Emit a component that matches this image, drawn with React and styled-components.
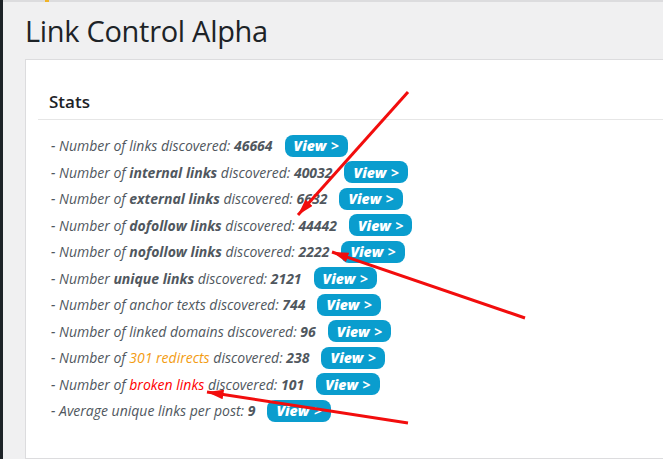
import React from "react";
import styled, { createGlobalStyle } from "styled-components";

const GlobalStyle = createGlobalStyle`
  html, body {
    margin: 0;
    padding: 0;
    height: 100%;
    overflow: hidden;
  }
  body {
    font-family: "Open Sans", "Noto Sans", sans-serif;
    background: #f0f0f1;
  }
`;

const stats = [
  { pre: "Number of ", strong: "", mid: "links discovered: ", value: "46664" },
  { pre: "Number of ", strong: "internal links", mid: " discovered: ", value: "40032" },
  { pre: "Number of ", strong: "external links", mid: " discovered: ", value: "6632" },
  { pre: "Number of ", strong: "dofollow links", mid: " discovered: ", value: "44442" },
  { pre: "Number of ", strong: "nofollow links", mid: " discovered: ", value: "2222" },
  { pre: "Number ", strong: "unique links", mid: " discovered: ", value: "2121" },
  { pre: "Number of anchor texts discovered: ", value: "744" },
  { pre: "Number of linked domains discovered: ", value: "96" },
  { pre: "Number of ", tone: "orange", tinted: "301 redirects", mid: " discovered: ", value: "238" },
  { pre: "Number of ", tone: "red", tinted: "broken links", mid: " discovered: ", value: "101" },
  { pre: "Average unique links per post: ", value: "9" },
];

export default function App() {
  return (
    <>
      <GlobalStyle />
      <Shell>
        <AdminBar />
        <Main>
          <NoticeEdge>
            <NoticeTick />
          </NoticeEdge>
          <Title>Link Control Alpha</Title>
          <Panel>
            <PanelHead>
              <h2>Stats</h2>
            </PanelHead>
            <List>
              {stats.map((s, i) => (
                <Row key={i}>
                  <Label>
                    - {s.pre}
                    {s.strong && <b>{s.strong}</b>}
                    {s.tinted && <Tint $tone={s.tone}>{s.tinted}</Tint>}
                    {s.mid}
                    <b>{s.value}</b>
                  </Label>
                  <ViewButton>
                    View <span>&gt;</span>
                  </ViewButton>
                </Row>
              ))}
            </List>
          </Panel>
        </Main>
        {/* annotation arrows drawn over the screenshot */}
        <Arrows viewBox="0 0 663 459">
          <defs>
            <marker id="head" markerWidth="6" markerHeight="4" refX="5.5" refY="1.6" orient="auto" markerUnits="strokeWidth">
              <path d="M0,0 L5.5,1.6 L0,3.2 Z" fill="#f20d0d" />
            </marker>
          </defs>
          <line x1="408" y1="92" x2="298" y2="215" stroke="#f20d0d" strokeWidth="3" markerEnd="url(#head)" />
          <line x1="525" y1="318" x2="332" y2="252" stroke="#f20d0d" strokeWidth="3" markerEnd="url(#head)" />
          <line x1="408" y1="423" x2="207" y2="392" stroke="#f20d0d" strokeWidth="3" markerEnd="url(#head)" />
        </Arrows>
      </Shell>
    </>
  );
}

const Shell = styled.div`
  position: relative;
  display: flex;
  height: 100vh;
  overflow: hidden;
`;

const AdminBar = styled.div`
  width: 3px;
  flex: none;
  background: #1d2327;
`;

const Main = styled.div`
  flex: 1;
  display: flex;
  flex-direction: column;
  padding-left: 22px;
  background: #f0f0f1;
`;

const NoticeEdge = styled.div`
  height: 2px;
  margin-left: -22px;
  background: #dcdcde;
`;

const NoticeTick = styled.div`
  width: 4px;
  height: 2px;
  margin-left: 42px;
  background: #f0b429;
`;

const Title = styled.h1`
  margin: 9px 0 0 0;
  font-size: 29px;
  font-weight: 400;
  line-height: 40px;
  color: #1d2327;
  letter-spacing: -0.3px;
`;

const Panel = styled.div`
  margin-top: 8px;
  margin-right: -10px;
  flex: 1;
  background: #fff;
  border: 1px solid #dcdcde;
`;

const PanelHead = styled.div`
  margin: 30px 0 0 12px;
  padding: 0 11px 5px;
  border-bottom: 1px solid #e6e6e6;

  h2 {
    margin: 0;
    font-size: 17px;
    font-weight: 600;
    line-height: 24px;
    color: #1d2327;
  }
`;

const List = styled.div`
  display: flex;
  flex-direction: column;
  gap: 4.8px;
  padding: 15px 0 0 25px;
`;

const Row = styled.div`
  display: flex;
  align-items: center;
  gap: 12px;
  height: 21.7px;
`;

const Label = styled.span`
  font-size: 14px;
  font-style: italic;
  color: #50575e;
  white-space: nowrap;

  b {
    font-weight: 700;
  }
`;

const Tint = styled.span`
  color: ${(p) => (p.$tone === "red" ? "#ff0000" : "#f39c12")};
`;

const ViewButton = styled.button`
  height: 22px;
  padding: 0 9px;
  border: none;
  border-radius: 8px;
  background: #0a9dce;
  color: #fff;
  font-family: "Open Sans", "Noto Sans", sans-serif;
  font-size: 14px;
  font-style: italic;
  font-weight: 800;
  white-space: nowrap;
  cursor: pointer;

  span {
    font-style: normal;
    font-weight: 700;
    margin-left: 1px;
  }
`;

const Arrows = styled.svg`
  position: absolute;
  inset: 0;
  width: 663px;
  height: 459px;
  pointer-events: none;
`;
